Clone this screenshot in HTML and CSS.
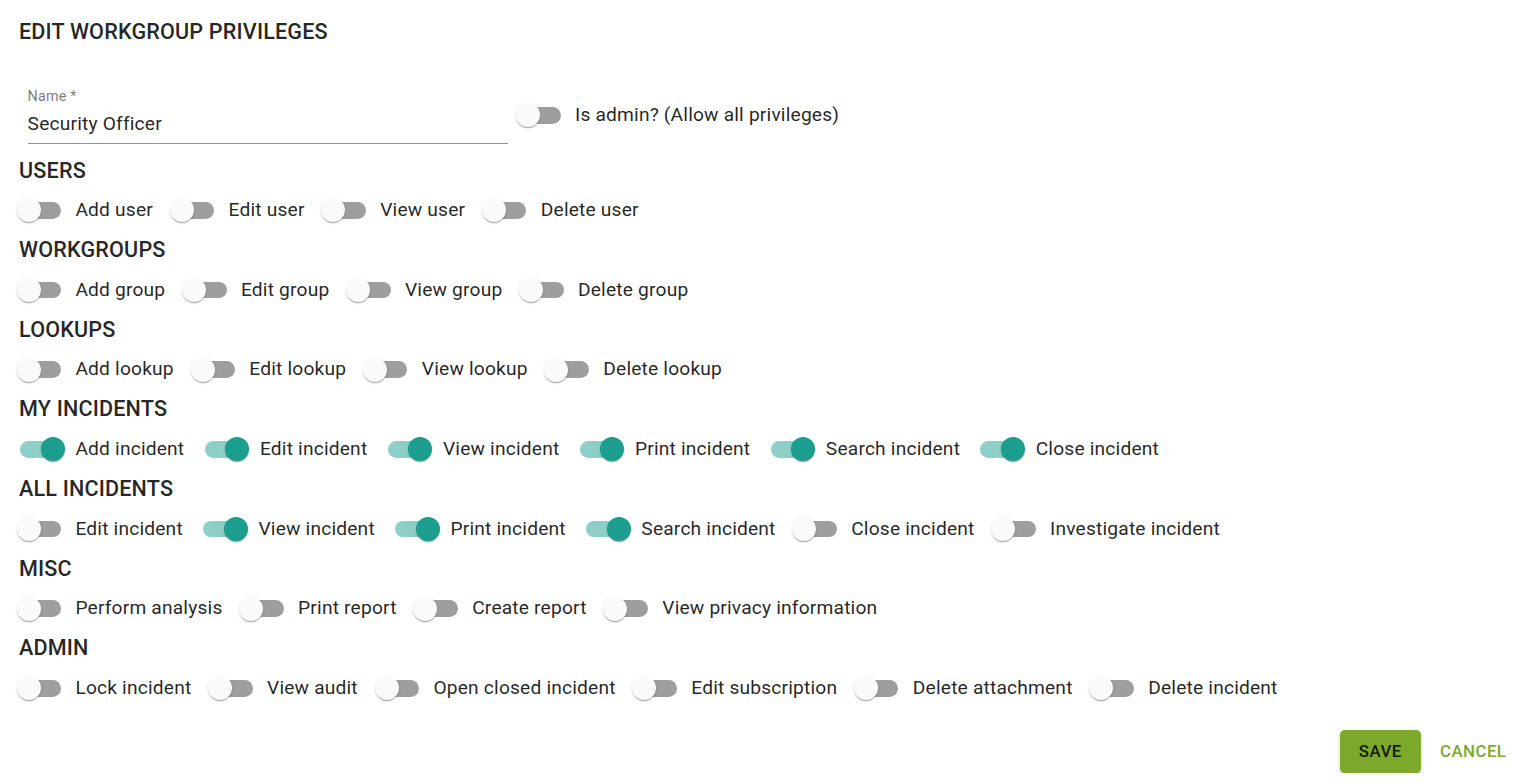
FILE: index.html
```html
<!DOCTYPE html>
<html lang="en">
<head>
<meta charset="utf-8">
<title>Edit workgroup privileges</title>
<link rel="stylesheet" href="styles.css">
</head>
<body>
<main class="page">
  <h1 class="title">EDIT WORKGROUP PRIVILEGES</h1>

  <div class="name-row">
    <div class="field">
      <label class="field-label">Name *</label>
      <div class="field-input">Security Officer</div>
    </div>
    <label class="toggle">
      <span class="switch"><span class="track"></span><span class="thumb"></span></span>
      <span class="toggle-text">Is admin? (Allow all privileges)</span>
    </label>
  </div>

  <section class="group">
    <h2 class="group-title">USERS</h2>
    <div class="toggles">
      <label class="toggle"><span class="switch"><span class="track"></span><span class="thumb"></span></span><span class="toggle-text">Add user</span></label>
      <label class="toggle"><span class="switch"><span class="track"></span><span class="thumb"></span></span><span class="toggle-text">Edit user</span></label>
      <label class="toggle"><span class="switch"><span class="track"></span><span class="thumb"></span></span><span class="toggle-text">View user</span></label>
      <label class="toggle"><span class="switch"><span class="track"></span><span class="thumb"></span></span><span class="toggle-text">Delete user</span></label>
    </div>
  </section>

  <section class="group">
    <h2 class="group-title">WORKGROUPS</h2>
    <div class="toggles">
      <label class="toggle"><span class="switch"><span class="track"></span><span class="thumb"></span></span><span class="toggle-text">Add group</span></label>
      <label class="toggle"><span class="switch"><span class="track"></span><span class="thumb"></span></span><span class="toggle-text">Edit group</span></label>
      <label class="toggle"><span class="switch"><span class="track"></span><span class="thumb"></span></span><span class="toggle-text">View group</span></label>
      <label class="toggle"><span class="switch"><span class="track"></span><span class="thumb"></span></span><span class="toggle-text">Delete group</span></label>
    </div>
  </section>

  <section class="group">
    <h2 class="group-title">LOOKUPS</h2>
    <div class="toggles">
      <label class="toggle"><span class="switch"><span class="track"></span><span class="thumb"></span></span><span class="toggle-text">Add lookup</span></label>
      <label class="toggle"><span class="switch"><span class="track"></span><span class="thumb"></span></span><span class="toggle-text">Edit lookup</span></label>
      <label class="toggle"><span class="switch"><span class="track"></span><span class="thumb"></span></span><span class="toggle-text">View lookup</span></label>
      <label class="toggle"><span class="switch"><span class="track"></span><span class="thumb"></span></span><span class="toggle-text">Delete lookup</span></label>
    </div>
  </section>

  <section class="group">
    <h2 class="group-title">MY INCIDENTS</h2>
    <div class="toggles">
      <label class="toggle"><span class="switch on"><span class="track"></span><span class="thumb"></span></span><span class="toggle-text">Add incident</span></label>
      <label class="toggle"><span class="switch on"><span class="track"></span><span class="thumb"></span></span><span class="toggle-text">Edit incident</span></label>
      <label class="toggle"><span class="switch on"><span class="track"></span><span class="thumb"></span></span><span class="toggle-text">View incident</span></label>
      <label class="toggle"><span class="switch on"><span class="track"></span><span class="thumb"></span></span><span class="toggle-text">Print incident</span></label>
      <label class="toggle"><span class="switch on"><span class="track"></span><span class="thumb"></span></span><span class="toggle-text">Search incident</span></label>
      <label class="toggle"><span class="switch on"><span class="track"></span><span class="thumb"></span></span><span class="toggle-text">Close incident</span></label>
    </div>
  </section>

  <section class="group">
    <h2 class="group-title">ALL INCIDENTS</h2>
    <div class="toggles">
      <label class="toggle"><span class="switch"><span class="track"></span><span class="thumb"></span></span><span class="toggle-text">Edit incident</span></label>
      <label class="toggle"><span class="switch on"><span class="track"></span><span class="thumb"></span></span><span class="toggle-text">View incident</span></label>
      <label class="toggle"><span class="switch on"><span class="track"></span><span class="thumb"></span></span><span class="toggle-text">Print incident</span></label>
      <label class="toggle"><span class="switch on"><span class="track"></span><span class="thumb"></span></span><span class="toggle-text">Search incident</span></label>
      <label class="toggle"><span class="switch"><span class="track"></span><span class="thumb"></span></span><span class="toggle-text">Close incident</span></label>
      <label class="toggle"><span class="switch"><span class="track"></span><span class="thumb"></span></span><span class="toggle-text">Investigate incident</span></label>
    </div>
  </section>

  <section class="group">
    <h2 class="group-title">MISC</h2>
    <div class="toggles">
      <label class="toggle"><span class="switch"><span class="track"></span><span class="thumb"></span></span><span class="toggle-text">Perform analysis</span></label>
      <label class="toggle"><span class="switch"><span class="track"></span><span class="thumb"></span></span><span class="toggle-text">Print report</span></label>
      <label class="toggle"><span class="switch"><span class="track"></span><span class="thumb"></span></span><span class="toggle-text">Create report</span></label>
      <label class="toggle"><span class="switch"><span class="track"></span><span class="thumb"></span></span><span class="toggle-text">View privacy information</span></label>
    </div>
  </section>

  <section class="group">
    <h2 class="group-title">ADMIN</h2>
    <div class="toggles">
      <label class="toggle"><span class="switch"><span class="track"></span><span class="thumb"></span></span><span class="toggle-text">Lock incident</span></label>
      <label class="toggle"><span class="switch"><span class="track"></span><span class="thumb"></span></span><span class="toggle-text">View audit</span></label>
      <label class="toggle"><span class="switch"><span class="track"></span><span class="thumb"></span></span><span class="toggle-text">Open closed incident</span></label>
      <label class="toggle"><span class="switch"><span class="track"></span><span class="thumb"></span></span><span class="toggle-text">Edit subscription</span></label>
      <label class="toggle"><span class="switch"><span class="track"></span><span class="thumb"></span></span><span class="toggle-text">Delete attachment</span></label>
      <label class="toggle"><span class="switch"><span class="track"></span><span class="thumb"></span></span><span class="toggle-text">Delete incident</span></label>
    </div>
  </section>

  <div class="actions">
    <button class="btn btn-save" type="button">SAVE</button>
    <button class="btn btn-cancel" type="button">CANCEL</button>
  </div>
</main>
</body>
</html>
```

FILE: styles.css
```css
* { box-sizing: border-box; }

html, body {
  margin: 0;
  padding: 0;
  background: #ffffff;
}

body {
  font-family: Roboto, "Liberation Sans", Arial, sans-serif;
  color: rgba(0, 0, 0, 0.87);
}

.page {
  display: flex;
  flex-direction: column;
  padding: 15px 5px 0 19px;
}

.title {
  margin: 0;
  font-size: 21.6px;
  font-weight: 500;
  line-height: 34.56px;
  letter-spacing: 0.0075em;
}

.name-row {
  display: flex;
  align-items: center;
  margin-top: 36.8px;
}

.field {
  display: flex;
  flex-direction: column;
  width: 480px;
  height: 57.6px;
  margin-left: 8.6px;
  margin-right: 11px;
  border-bottom: 1px solid rgba(0, 0, 0, 0.42);
}

.field-label {
  font-size: 14.4px;
  line-height: 1;
  color: rgba(0, 0, 0, 0.54);
  letter-spacing: 0.00938em;
  margin-top: 4px;
}

.field-input {
  margin-top: 8px;
  font-size: 19.2px;
  line-height: 22.8px;
  letter-spacing: 0.00938em;
}

.group {
  display: flex;
  flex-direction: column;
}

.name-row + .group {
  margin-top: 9.6px;
}

.group-title {
  margin: 0;
  font-size: 21.6px;
  font-weight: 500;
  line-height: 34.05px;
  letter-spacing: 0.0075em;
}

.toggles {
  display: flex;
  flex-wrap: wrap;
  align-items: center;
}

.toggle {
  display: inline-flex;
  align-items: center;
  margin-left: -13.2px;
  margin-right: 19.2px;
  cursor: pointer;
}

.switch {
  position: relative;
  display: inline-block;
  width: 69.6px;
  height: 45.6px;
  padding: 14.4px;
  flex-shrink: 0;
}

.track {
  display: block;
  width: 100%;
  height: 100%;
  border-radius: 8.4px;
  background: #000000;
  opacity: 0.38;
}

.thumb {
  position: absolute;
  top: 10.8px;
  left: 10.8px;
  width: 24px;
  height: 24px;
  border-radius: 50%;
  background: #fafafa;
  box-shadow: 0 2px 1px -1px rgba(0, 0, 0, 0.2), 0 1px 1px 0 rgba(0, 0, 0, 0.14), 0 1px 3px 0 rgba(0, 0, 0, 0.12);
}

.switch.on .track {
  background: #1b9e8e;
  opacity: 0.5;
}

.switch.on .thumb {
  left: 34.8px;
  background: #1b9e8e;
}

.toggle-text {
  font-size: 19.2px;
  line-height: 1.5;
  letter-spacing: 0.00938em;
}

.actions {
  display: flex;
  justify-content: flex-end;
  align-items: center;
  margin-top: 19px;
}

.btn {
  font-family: Roboto, "Liberation Sans", Arial, sans-serif;
  font-size: 16.8px;
  font-weight: 500;
  line-height: 1.75;
  letter-spacing: 0.02857em;
  border: 0;
  border-radius: 4.8px;
  min-width: 76.8px;
  cursor: pointer;
}

.btn-save {
  height: 43.2px;
  padding: 7.2px 19.2px;
  background: #7ca82b;
  color: rgba(0, 0, 0, 0.87);
  box-shadow: 0 3px 1px -2px rgba(0, 0, 0, 0.2), 0 2px 2px 0 rgba(0, 0, 0, 0.14), 0 1px 5px 0 rgba(0, 0, 0, 0.12);
}

.btn-cancel {
  height: 43.2px;
  margin-left: 9.6px;
  padding: 7.2px 9.6px;
  background: transparent;
  color: #7ca82b;
}
```
